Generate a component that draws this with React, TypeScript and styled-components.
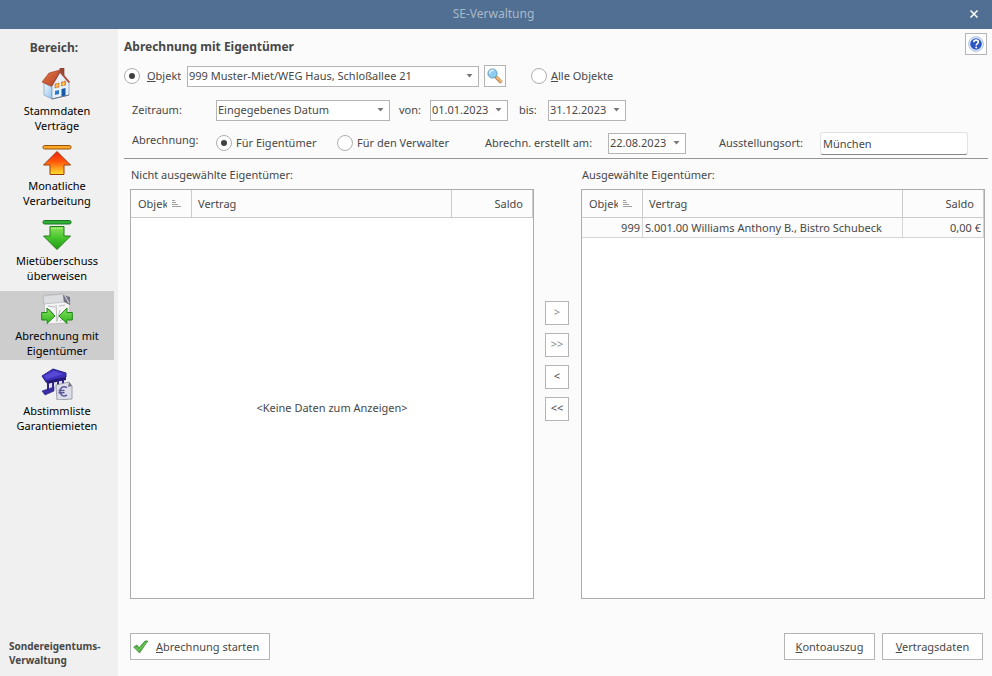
import React, { useId } from "react";
import styled, { createGlobalStyle, css } from "styled-components";

const GlobalStyle = createGlobalStyle`
  * { box-sizing: border-box; }
  body {
    margin: 0;
    background: #fbfbfb;
    color: #484848;
    font: 11px/16px "Noto Sans", "Open Sans", sans-serif;
  }
  button, input, select { font: inherit; color: inherit; margin: 0; }
`;

const Window = styled.div`
  display: flex;
  flex-direction: column;
  min-height: 100vh;
`;

const TitleBar = styled.header`
  display: grid;
  grid-template-columns: 31px 1fr 36px;
  align-items: center;
  height: 29px;
  padding-bottom: 1px;
  background: #506f92;
  color: #a9b9ca;
  font-size: 12px;
  text-align: center;
`;

const WindowTitle = styled.span`
  grid-column: 2;
`;

const CloseButton = styled.button`
  display: grid;
  place-items: center;
  height: 28px;
  padding: 0;
  border: 0;
  background: none;
`;

const Body = styled.div`
  display: flex;
  flex: 1;
`;

const Sidebar = styled.nav`
  display: flex;
  flex-direction: column;
  flex: none;
  width: 118px;
  padding: 10px 4px 9px 0;
  background: #f0f0f0;
`;

const SidebarTitle = styled.h2`
  margin: 0 0 9px;
  padding-right: 6px;
  font-size: 12px;
  line-height: 18px;
  text-align: center;
`;

const NavList = styled.div`
  display: flex;
  flex-direction: column;
  gap: 6px;
`;

const NavItem = styled.button<{ $active?: boolean }>`
  display: flex;
  flex-direction: column;
  align-items: center;
  gap: 3px;
  padding: 2px 0;
  border: 0;
  background: ${(p) => (p.$active ? "#cdcdcd" : "transparent")};
  color: #000;
  line-height: 15px;
  white-space: pre-line;
`;

const SidebarFooter = styled.div`
  margin-top: auto;
  padding-left: 9px;
  font-size: 10px;
  font-weight: 700;
  line-height: 14px;
`;

const Main = styled.main`
  display: flex;
  flex-direction: column;
  flex: 1;
  min-width: 0;
  padding: 4px 4px 16px 6px;
`;

const Heading = styled.div`
  display: flex;
  justify-content: space-between;
  align-items: flex-start;
  height: 28px;
  padding-right: 1px;
`;

const PageTitle = styled.h1`
  margin: 0;
  font-size: 12px;
  line-height: 28px;
`;

const boxed = css`
  border: 1px solid #b4b4b4;
  background: #fff;
`;

const IconButton = styled.button`
  ${boxed}
  display: grid;
  place-items: center;
  width: 22px;
  height: 22px;
  padding: 0;
`;

const Form = styled.form`
  display: flex;
  flex-direction: column;
  padding-bottom: 1px;
  border-bottom: 1px solid #969696;
`;

const FormRow = styled.div<{ $inset?: boolean; $height: number }>`
  display: flex;
  align-items: center;
  height: ${(p) => p.$height}px;
  padding-left: ${(p) => (p.$inset ? 8 : 0)}px;
`;

const RowLabel = styled.label<{ $width: number; $raised?: boolean }>`
  flex: none;
  width: ${(p) => p.$width}px;
  padding-bottom: ${(p) => (p.$raised ? 6 : 0)}px;
  white-space: nowrap;
`;

const RadioLabel = styled.label<{ $width?: number; $gap?: number; $indent?: number }>`
  display: flex;
  align-items: center;
  flex: none;
  gap: ${(p) => p.$gap ?? 4}px;
  width: ${(p) => (p.$width ? `${p.$width}px` : "auto")};
  margin-left: ${(p) => p.$indent ?? 0}px;
  white-space: nowrap;
`;

const RadioText = styled.span`
  overflow: hidden;
`;

const Radio = styled.input.attrs({ type: "radio" })`
  appearance: none;
  display: grid;
  place-items: center;
  flex: none;
  width: 16px;
  height: 16px;
  border: 1px solid #aeaeae;
  border-radius: 50%;
  background: #fff;

  &:checked::before {
    content: "";
    width: 6px;
    height: 6px;
    border-radius: 50%;
    background: #404040;
  }
`;

const ComboBox = styled.div<{ $width: number }>`
  ${boxed}
  display: flex;
  flex: 0 1 ${(p) => p.$width}px;
  height: 21px;
  min-width: 0;
`;

const ComboInput = styled.input`
  flex: 1;
  min-width: 0;
  width: 0;
  padding: 0 0 1px 1px;
  border: 0;
  background: none;
`;

const ComboArrow = styled.button`
  display: grid;
  place-items: center;
  width: 17px;
  padding: 0;
  border: 0;
  background: none;
`;

const SelectBox = styled.div<{ $width: number }>`
  ${boxed}
  display: grid;
  grid-template-columns: 1fr 18px;
  align-items: center;
  flex: 0 1 ${(p) => p.$width}px;
  height: 21px;
  min-width: 0;

  svg {
    grid-area: 1 / 2;
    justify-self: center;
    pointer-events: none;
  }
`;

const Select = styled.select`
  appearance: none;
  grid-area: 1 / 1 / 2 / 3;
  min-width: 0;
  height: 19px;
  padding: 0 18px 1px 1px;
  border: 0;
  background: none;
`;

const TextBox = styled.input`
  flex: 0 1 148px;
  min-width: 0;
  height: 23px;
  padding: 0 2px;
  border: 1px solid #e2e2e2;
  border-bottom-color: #868686;
  border-radius: 3px;
  background: #fff;
`;

const FieldSpacer = styled.span<{ $width: number }>`
  flex: none;
  width: ${(p) => p.$width}px;
`;

const Transfer = styled.div`
  display: grid;
  grid-template-columns: minmax(0, 1fr) 47px minmax(0, 1fr);
  grid-template-rows: auto 1fr;
  flex: 1;
  padding: 8px 3px 34px 6px;
`;

const ListTitle = styled.h3<{ $column: number }>`
  grid-column: ${(p) => p.$column};
  margin: 0;
  padding: 0 0 6px 1px;
  font-size: 11px;
  font-weight: 400;
  line-height: 16px;
`;

const ListPanel = styled.section`
  display: flex;
  flex-direction: column;
  border: 1px solid #acacac;
  background: #fff;
`;

const Table = styled.table`
  width: 100%;
  table-layout: fixed;
  border-collapse: separate;
  border-spacing: 0;
`;

const Col = styled.col<{ $width?: number }>`
  width: ${(p) => (p.$width ? `${p.$width}px` : "auto")};
`;

const HeaderCell = styled.th<{ $right?: boolean }>`
  height: 28px;
  padding: 0 9px 0 6px;
  border-right: 1px solid #cbcbcb;
  border-bottom: 1px solid #cbcbcb;
  background: #fcfcfc;
  font-weight: 400;
  text-align: ${(p) => (p.$right ? "right" : "left")};
`;

const SortHeader = styled.span`
  display: flex;
  align-items: center;
  gap: 5px;
  padding-left: 1px;
`;

const ClippedText = styled.span`
  width: 29px;
  overflow: hidden;
`;

const Cell = styled.td<{ $right?: boolean }>`
  height: 20px;
  padding: 0 2px;
  border-right: 1px solid #d4d4d4;
  border-bottom: 1px solid #d4d4d4;
  background: #fcfcfc;
  text-align: ${(p) => (p.$right ? "right" : "left")};
  white-space: nowrap;
`;

const EmptyNote = styled.p`
  display: grid;
  place-items: center;
  flex: 1;
  margin: 0;
`;

const MoveButtons = styled.div`
  display: flex;
  flex-direction: column;
  align-items: flex-start;
  gap: 8px;
  padding: 112px 0 0 11px;
`;

const MoveButton = styled.button`
  ${boxed}
  width: 24px;
  height: 24px;
  padding: 0 0 2px;
  line-height: 20px;

  &:disabled { color: #8c8c8c; }
`;

const Footer = styled.footer`
  display: flex;
  gap: 7px;
  padding: 0 5px 0 6px;
`;

const ActionButton = styled.button<{ $width: number; $start?: boolean }>`
  ${boxed}
  display: flex;
  align-items: center;
  justify-content: ${(p) => (p.$start ? "flex-start" : "center")};
  gap: 7px;
  width: ${(p) => p.$width}px;
  height: 27px;
  margin-right: ${(p) => (p.$start ? "auto" : "0")};
  padding: 0 2px;
  white-space: nowrap;
`;

const Arrow = () => (
  <svg width="7" height="4" viewBox="0 0 7 4"><path d="M.5 0h6L3.500 3.500z" fill="#777" /></svg>
);

const SortIcon = () => (
  <svg width="9" height="9" viewBox="0 0 9 9" stroke="#a0a0a0">
    <path d="M0 1.500h3M0 3.500h4M0 5.500h6M0 7.500h9" />
  </svg>
);

const HouseIcon = () => (
  <svg width="32" height="32" viewBox="0 0 32 32">
    <defs>
      <linearGradient id="wall" x1="0" y1="0" x2="1" y2="1">
        <stop offset="0" stopColor="#f4faff" /><stop offset="1" stopColor="#8fc0ee" />
      </linearGradient>
      <linearGradient id="roof" x1="0" y1="0" x2="1" y2="1">
        <stop offset="0" stopColor="#e07a50" /><stop offset="1" stopColor="#b9401c" />
      </linearGradient>
    </defs>
    <path d="M19 0h4v9h-4z" fill="#9a4635" stroke="#6d3a32" strokeWidth=".6" />
    <path d="M3 15l8 4v12l-8-4z" fill="url(#wall)" stroke="#8199b5" strokeWidth=".7" />
    <path d="M11 18L19 4l9 10v13l-17 4z" fill="#e6f1fc" stroke="#8199b5" strokeWidth=".7" />
    <path d="M1 14L8 5l11-3-9 16z" fill="url(#roof)" stroke="#9b391d" strokeWidth=".6" />
    <path d="M19 2l10 12-1.500 1L19 5l-8 13.500-1.500-.5z" fill="#a94c34" />
    <path d="M14 16l4-1v4l-4 1zM20.500 14l4-1v4l-4 1z" fill="#f39a20" stroke="#c25528" strokeWidth=".6" />
    <path d="M16 15v5M22.500 13v5M14 18l10-2.500" stroke="#fce27b" strokeWidth=".6" />
    <path d="M14 23l4-1v4l-4 1z" fill="#2d77c8" />
    <path d="M20.500 21l4-1v8l-4 1z" fill="#1b58a8" />
    <path d="M11 31l17-4" stroke="#6c7787" />
  </svg>
);

const UpIcon = () => (
  <svg width="32" height="32" viewBox="0 0 32 32">
    <defs>
      <linearGradient id="up" x1="0" y1="0" x2="0" y2="1">
        <stop offset="0" stopColor="#f51b0b" /><stop offset=".45" stopColor="#ff5a0b" /><stop offset="1" stopColor="#ffe22d" />
      </linearGradient>
    </defs>
    <rect x="2" y="2.500" width="28" height="3.500" rx="1.500" fill="#ffa726" stroke="#96530e" />
    <path d="M16 8.500L29.500 22H23v9.500H9V22H2.500z" fill="url(#up)" stroke="#9a3c10" strokeLinejoin="round" />
  </svg>
);

const DownIcon = () => (
  <svg width="32" height="32" viewBox="0 0 32 32">
    <defs>
      <linearGradient id="down" x1="0" y1="0" x2="0" y2="1">
        <stop offset="0" stopColor="#8be35e" /><stop offset=".5" stopColor="#46c42c" /><stop offset="1" stopColor="#1f9a16" />
      </linearGradient>
    </defs>
    <rect x="2" y="2.500" width="28" height="3.500" rx="1.500" fill="#2eae34" stroke="#1d7426" />
    <path d="M9 8.500h14V18h6.500L16 31.500 2.500 18H9z" fill="url(#down)" stroke="#257a1b" strokeLinejoin="round" />
    <path d="M10 10.500h12" stroke="#c8f7a8" strokeDasharray="1 1" />
  </svg>
);

const StatementIcon = () => (
  <svg width="32" height="32" viewBox="0 0 32 32">
    <defs>
      <linearGradient id="side" x1="0" y1="0" x2="0" y2="1">
        <stop offset="0" stopColor="#86e45c" /><stop offset="1" stopColor="#2eb31f" />
      </linearGradient>
    </defs>
    <path d="M3 2L24 1l5 5-1 24-24 1z" fill="#f4f4f4" stroke="#b3b3b3" strokeWidth=".7" />
    <path d="M2 3l20-2 1 8-20 2z" fill="#dcdee1" stroke="#aaa" strokeWidth=".6" />
    <path d="M22 2l7 2v8l-6-3z" fill="#717381" />
    <path d="M24 3l4 7" stroke="#c5c7d2" strokeWidth="1.500" />
    <path d="M15 12l1 17M7 13l7 1M18 13l6-1M8 16l5 5M19 17l-3 11M19 28l6-5" stroke="#b9b9b9" fill="none" />
    <path d="M.7 19.500h5.300v-4.500L14 23l-8 7.500V27H.7z" fill="url(#side)" stroke="#21851b" strokeLinejoin="round" />
    <path d="M31.300 19.500H26v-4.500L18 23l8 7.500V27h5.300z" fill="url(#side)" stroke="#21851b" strokeLinejoin="round" />
  </svg>
);

const BankIcon = () => (
  <svg width="32" height="32" viewBox="0 0 32 32">
    <path d="M1 8L12 1l13 4v4L5 14z" fill="#3f30bd" stroke="#2a2189" strokeLinejoin="round" />
    <path d="M3 8l10-5 9 3-16 5z" fill="#5748d6" />
    <path d="M5 13l20-4v3L6 16z" fill="#241b75" />
    <path d="M7 15v10M12 14v9M17 13v6M22 12v5" stroke="#33278d" strokeWidth="2" />
    <path d="M9.500 16v7M14.500 15v6M19.500 13v5" stroke="#dcdbe9" strokeWidth="2" />
    <path d="M1 23l12-4v4L4 27z" fill="#3a2ea6" stroke="#251c7a" strokeWidth=".6" />
    <path d="M15 17l13-3 3 4v13l-15 1z" fill="#dedee8" stroke="#8c8c98" strokeWidth=".8" />
    <path d="M28 14l-1 5 4-1z" fill="#777783" />
    <path d="M26 19.500c-5-2-7 1-7 4s3 6 7 3.500M17.500 22.500h6M17.500 24.700h6" fill="none" stroke="#5a5a9b" strokeWidth="1.500" />
  </svg>
);

const MagnifierIcon = () => (
  <svg width="18" height="18" viewBox="0 0 18 18">
    <path d="M10.500 10.500l4 4" stroke="#b98350" strokeWidth="3.500" strokeLinecap="round" />
    <path d="M11 10.500l4 4" stroke="#f3b877" strokeWidth="2" strokeLinecap="round" />
    <circle cx="6.500" cy="6.500" r="4.600" fill="#8fcdf0" stroke="#6b9dbd" />
    <path d="M3.700 6.500a3 3 0 0 1 4-3" fill="none" stroke="#e2f5ff" strokeWidth="1.500" />
  </svg>
);

const HelpIcon = () => (
  <svg width="16" height="16" viewBox="0 0 16 16" fill="none">
    <circle cx="8" cy="8" r="7.400" fill="#e6eefb" stroke="#9eb2dc" strokeWidth=".8" />
    <circle cx="8" cy="8" r="5.800" fill="#2b55c0" />
    <path d="M5.800 6.300c0-3 4.600-2.800 4.600-.2 0 1.500-2.200 1.500-2.200 3.300" stroke="#fff" strokeWidth="1.600" />
    <circle cx="8.200" cy="11.500" r="1" fill="#fff" />
  </svg>
);

const CheckIcon = () => (
  <svg width="16" height="14" viewBox="0 0 16 14">
    <path d="M.7 7L4 5l2 2.700L12 1h2.800L6.500 13z" fill="#4db53c" stroke="#4a8a45" strokeWidth=".8" strokeLinejoin="round" />
    <path d="M2.500 7.500L6 10.500 13 2.500" fill="none" stroke="#7ccb68" />
  </svg>
);

const sections = [
  { label: "Stammdaten\nVerträge", icon: <HouseIcon /> },
  { label: "Monatliche\nVerarbeitung", icon: <UpIcon /> },
  { label: "Mietüberschuss\nüberweisen", icon: <DownIcon /> },
  { label: "Abrechnung mit\nEigentümer", icon: <StatementIcon />, active: true },
  { label: "Abstimmliste\nGarantiemieten", icon: <BankIcon /> },
];

function DateField({ id, value }: { id: string; value: string }) {
  return (
    <ComboBox $width={78}>
      <ComboInput id={id} defaultValue={value} />
      <ComboArrow type="button" aria-label="Kalender öffnen"><Arrow /></ComboArrow>
    </ComboBox>
  );
}

type Owner = { objekt: string; vertrag: string; saldo: string };

function OwnerList({ owners }: { owners: Owner[] }) {
  return (
    <ListPanel>
      <Table>
        <colgroup><Col $width={61} /><Col /><Col $width={81} /></colgroup>
        <thead>
          <tr>
            <HeaderCell><SortHeader><ClippedText>Objekt</ClippedText><SortIcon /></SortHeader></HeaderCell>
            <HeaderCell>Vertrag</HeaderCell>
            <HeaderCell $right>Saldo</HeaderCell>
          </tr>
        </thead>
        <tbody>
          {owners.map((o) => (
            <tr key={o.vertrag}>
              <Cell $right>{o.objekt}</Cell>
              <Cell>{o.vertrag}</Cell>
              <Cell $right>{o.saldo}</Cell>
            </tr>
          ))}
        </tbody>
      </Table>
      {owners.length === 0 && <EmptyNote>&lt;Keine Daten zum Anzeigen&gt;</EmptyNote>}
    </ListPanel>
  );
}

export default function App() {
  const id = useId();
  return (
    <Window>
      <GlobalStyle />
      <TitleBar>
        <WindowTitle>SE-Verwaltung</WindowTitle>
        <CloseButton aria-label="Schließen">
          <svg width="8" height="8" viewBox="0 0 8 8" stroke="#fff" strokeWidth="1.500"><path d="M.5.500l7 7M7.500.500l-7 7" /></svg>
        </CloseButton>
      </TitleBar>
      <Body>
        <Sidebar>
          <SidebarTitle>Bereich:</SidebarTitle>
          <NavList>
            {sections.map((s) => (
              <NavItem key={s.label} $active={s.active}>{s.icon}<span>{s.label}</span></NavItem>
            ))}
          </NavList>
          <SidebarFooter>Sondereigentums-<br />Verwaltung</SidebarFooter>
        </Sidebar>
        <Main>
          <Heading>
            <PageTitle>Abrechnung mit Eigentümer</PageTitle>
            <IconButton aria-label="Hilfe"><HelpIcon /></IconButton>
          </Heading>
          <Form>
            <FormRow $height={30}>
              <RadioLabel $gap={7} $width={57}>
                <Radio name="scope" defaultChecked /><RadioText><u>O</u>bjekt</RadioText>
              </RadioLabel>
              <FieldSpacer $width={6} />
              <SelectBox $width={292}>
                <Select aria-label="Objekt"><option>999 Muster-Miet/WEG Haus, Schloßallee 21</option></Select>
                <Arrow />
              </SelectBox>
              <FieldSpacer $width={5} />
              <IconButton type="button" aria-label="Objekt suchen"><MagnifierIcon /></IconButton>
              <RadioLabel $indent={25}>
                <Radio name="scope" /><span><u>A</u>lle Objekte</span>
              </RadioLabel>
            </FormRow>
            <FormRow $inset $height={38}>
              <RowLabel $width={84} htmlFor={`${id}-period`}>Zeitraum:</RowLabel>
              <SelectBox $width={174}>
                <Select id={`${id}-period`}><option>Eingegebenes Datum</option></Select>
                <Arrow />
              </SelectBox>
              <FieldSpacer $width={9} />
              <RowLabel $width={31} htmlFor={`${id}-from`}>von:</RowLabel>
              <DateField id={`${id}-from`} value="01.01.2023" />
              <FieldSpacer $width={11} />
              <RowLabel $width={29} htmlFor={`${id}-to`}>bis:</RowLabel>
              <DateField id={`${id}-to`} value="31.12.2023" />
            </FormRow>
            <FormRow $inset $height={28}>
              <RowLabel as="span" $width={84} $raised>Abrechnung:</RowLabel>
              <RadioLabel $width={121}><Radio name="for" defaultChecked />Für Eigentümer</RadioLabel>
              <RadioLabel $width={148}><Radio name="for" />Für den Verwalter</RadioLabel>
              <RowLabel $width={123} htmlFor={`${id}-created`}>Abrechn. erstellt am:</RowLabel>
              <DateField id={`${id}-created`} value="22.08.2023" />
              <FieldSpacer $width={33} />
              <RowLabel $width={101} htmlFor={`${id}-place`}>Ausstellungsort:</RowLabel>
              <TextBox id={`${id}-place`} defaultValue="München" />
            </FormRow>
          </Form>
          <Transfer>
            <ListTitle $column={1}>Nicht ausgewählte Eigentümer:</ListTitle>
            <ListTitle $column={3}>Ausgewählte Eigentümer:</ListTitle>
            <OwnerList owners={[]} />
            <MoveButtons>
              <MoveButton disabled>&gt;</MoveButton>
              <MoveButton disabled>&gt;&gt;</MoveButton>
              <MoveButton>&lt;</MoveButton>
              <MoveButton>&lt;&lt;</MoveButton>
            </MoveButtons>
            <OwnerList owners={[{ objekt: "999", vertrag: "S.001.00 Williams Anthony B., Bistro Schubeck", saldo: "0,00 €" }]} />
          </Transfer>
          <Footer>
            <ActionButton $width={140} $start><CheckIcon /><span><u>A</u>brechnung starten</span></ActionButton>
            <ActionButton $width={91}><span><u>K</u>ontoauszug</span></ActionButton>
            <ActionButton $width={101}><span><u>V</u>ertragsdaten</span></ActionButton>
          </Footer>
        </Main>
      </Body>
    </Window>
  );
}
